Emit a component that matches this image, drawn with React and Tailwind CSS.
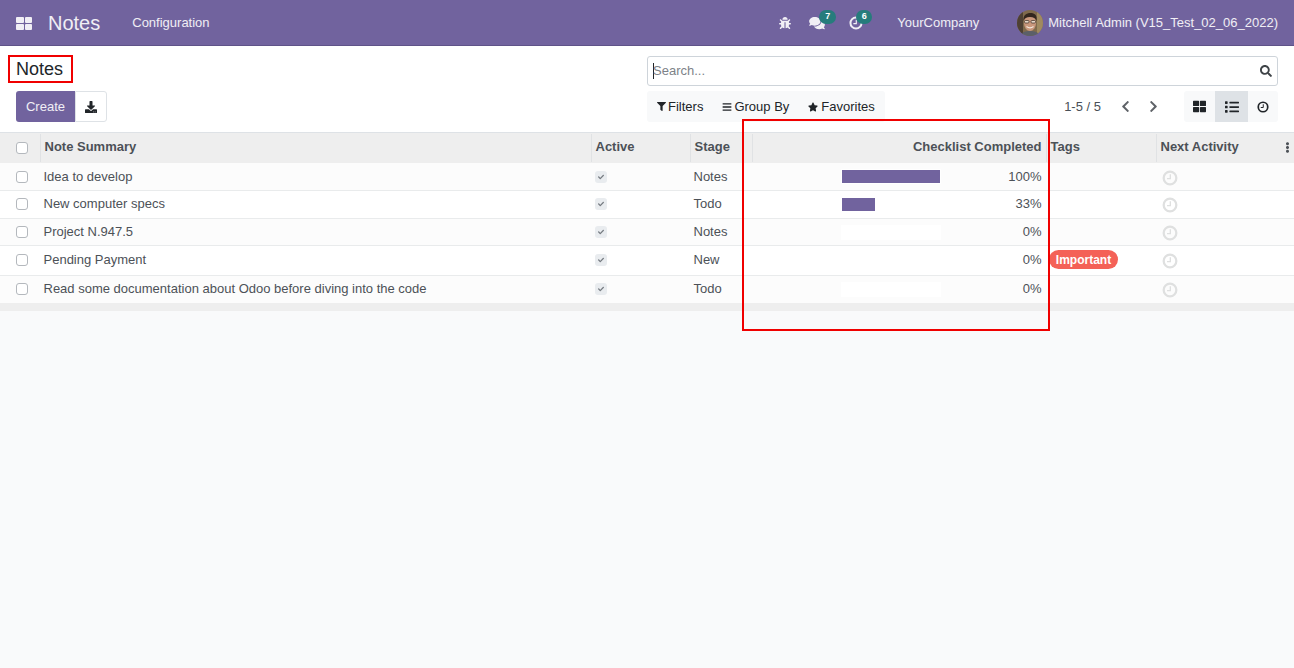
import { FaBug, FaComments, FaDownload, FaFilter, FaBars, FaStar, FaSearch, FaChevronLeft, FaChevronRight, FaThLarge, FaList, FaEllipsisV, FaCheck } from "react-icons/fa";

const rows = [
  { name: "Idea to develop", stage: "Notes", pct: 100, h: "h-[28px]", bg: "bg-[#fcfcfc]" },
  { name: "New computer specs", stage: "Todo", pct: 33, h: "h-[28px]", bg: "bg-white", up: true },
  { name: "Project N.947.5", stage: "Notes", pct: 0, h: "h-[27px]", bg: "bg-[#fcfcfc]" },
  { name: "Pending Payment", stage: "New", pct: 0, h: "h-[30px]", bg: "bg-white", tag: "Important", up: true },
  { name: "Read some documentation about Odoo before diving into the code", stage: "Todo", pct: 0, h: "h-[27px]", bg: "bg-[#fcfcfc]", last: true, up: true },
];

const cols = "grid grid-cols-[41px_550px_99px_62px_294px_110px_138px]";

function Check() {
  return <span className="block w-[12px] h-[12px] rounded-[3px] border border-[#b4b8bd] bg-white" />;
}

function ClockO({ className }) {
  return (
    <svg viewBox="0 0 24 24" fill="none" stroke="currentColor" className={className}>
      <circle cx="12" cy="12" r="9.5" strokeWidth="3.4" />
      <path d="M12.5 6.5v6.5H7.5" strokeWidth="2" />
    </svg>
  );
}

function Avatar() {
  return (
    <svg width="26" height="26" viewBox="0 0 26 26" className="rounded-full">
      <rect width="26" height="26" fill="#7f6a4c" />
      <rect x="0" y="0" width="6" height="26" fill="#4e4034" />
      <rect x="20" y="0" width="6" height="26" fill="#a08a60" />
      <ellipse cx="13" cy="13" rx="6" ry="8" fill="#c9977c" />
      <path d="M6.5 11c-.5-6 3-8 7-8s7 2 6 8c-1-3-3-4-6.500-4s-5.500 1-6.500 4z" fill="#33261e" />
      <rect x="7.500" y="10.500" width="4.500" height="2.500" rx="1" fill="#e8d8c8" stroke="#3a2c24" strokeWidth="0.7" />
      <rect x="14" y="10.500" width="4.500" height="2.500" rx="1" fill="#e8d8c8" stroke="#3a2c24" strokeWidth="0.7" />
      <path d="M9.500 16.500c2 1.500 5 1.500 7 0" stroke="#f3e7dd" strokeWidth="1.200" fill="none" />
      <path d="M3 26c1-4 6-5 10-5s9 1 10 5z" fill="#5b5f68" />
    </svg>
  );
}

function Navbar() {
  return (
    <header className="h-[46px] bg-[#71639e] border-b border-[#5f5388] flex items-center text-white">
      <span className="ml-4 grid grid-cols-2 gap-[1px] w-[16px] mt-[1px]">
        <i className="h-[6px] bg-white/90 rounded-[1px]" />
        <i className="h-[6px] bg-white/90 rounded-[1px]" />
        <i className="h-[6px] bg-white/90 rounded-[1px]" />
        <i className="h-[6px] bg-white/90 rounded-[1px]" />
      </span>
      <span className="ml-4 text-[20px] text-white/90">Notes</span>
      <span className="ml-[32px] text-[13px] text-white/90">Configuration</span>

      <div className="ml-auto flex items-center text-white/90 text-[13px]">
        <FaBug className="w-[12px] h-[12px]" />
        <span className="relative ml-[18px]">
          <FaComments className="w-[16px] h-[14px] block" />
          <span className="absolute -top-[6px] left-[10px] w-[17px] h-[14px] rounded-full bg-[#267c7c] text-white text-[9px] font-bold flex items-center justify-center">7</span>
        </span>
        <span className="relative ml-[24px]">
          <ClockO className="w-[14px] h-[14px] block" />
          <span className="absolute -top-[6px] left-[7px] w-[16px] h-[14px] rounded-full bg-[#267c7c] text-white text-[9px] font-bold flex items-center justify-center">6</span>
        </span>
        <span className="ml-[34px]">YourCompany</span>
        <span className="ml-[38px]"><Avatar /></span>
        <span className="ml-[5px] mr-4">Mitchell Admin (V15_Test_02_06_2022)</span>
      </div>
    </header>
  );
}

function ControlPanel() {
  return (
    <div className="h-[87px] bg-white grid grid-cols-[647px_1fr] pr-4 border-b border-[#dee2e6]">
      <div className="pt-[9px]">
        <h1 className="ml-2 w-[65px] h-[28px] border-2 border-[#f00000] text-[18px] leading-[25px] pl-[6px] text-[#212529]">Notes</h1>
        <div className="flex mt-2 ml-4">
          <button className="w-[59px] h-[31px] bg-[#71639e] text-white/90 text-[13px] rounded-l-[3px]">Create</button>
          <button className="w-[32px] h-[31px] border border-[#dee2e6] rounded-r-[3px] flex items-center justify-center text-[#212529]">
            <FaDownload className="w-[12px] h-[12px]" />
          </button>
        </div>
      </div>
      <div className="pt-[10px]">
        <div className="h-[30px] border border-[#ced4da] rounded-[3px] flex items-center pl-[5px] pr-[5px]">
          <span className="w-px h-[16px] bg-[#212529]" />
          <span className="-ml-px text-[13px] text-[#7d8288] flex-1">Search...</span>
          <FaSearch className="w-[12px] h-[12px] text-[#3f4448]" />
        </div>
        <div className="mt-[5px] flex items-center">
          <div className="w-[238px] h-[31px] bg-[#f8f9fa] rounded-[3px] flex items-center text-[13px] text-[#212529]">
            <span className="ml-[10px] flex items-center gap-[2px]"><FaFilter className="w-[9px] h-[9px]" />Filters</span>
            <span className="ml-[19px] flex items-center gap-[2px]"><FaBars className="w-[10px] h-[10px]" />Group By</span>
            <span className="ml-[19px] flex items-center gap-[3px]"><FaStar className="w-[10px] h-[10px]" />Favorites</span>
          </div>
          <span className="ml-auto text-[13px] text-[#495057]">1-5 / 5</span>
          <FaChevronLeft className="ml-[19px] w-[11px] h-[13px] text-[#5f6368]" />
          <FaChevronRight className="ml-[17px] w-[11px] h-[13px] text-[#5f6368]" />
          <div className="ml-[25px] w-[94px] h-[31px] bg-[#f8f9fa] rounded-[3px] flex text-[#212529]">
            <span className="w-[31px] flex items-center justify-center"><FaThLarge className="w-[13px] h-[13px]" /></span>
            <span className="w-[33px] bg-[#dee2e6] flex items-center justify-center"><FaList className="w-[14px] h-[14px]" /></span>
            <span className="w-[30px] flex items-center justify-center pr-[1px]"><ClockO className="w-[12px] h-[12px]" /></span>
          </div>
        </div>
      </div>
    </div>
  );
}

function Head({ children, right }) {
  return (
    <div className={`h-full flex items-center pb-[2px] text-[13px] font-bold text-[#4c5157] ${right ? "justify-end pr-[4.5px]" : "pl-[3.5px]"}`}>
      {children}
    </div>
  );
}

function Table() {
  return (
    <div>
      <div className={`${cols} h-[30px] bg-[#eeeeee]`}>
        <div className="flex items-center pl-4"><Check /></div>
        <div className="border-l border-[#e0e2e4] my-[1px] -ml-px"><Head>Note Summary</Head></div>
        <div className="border-l border-[#e0e2e4] my-[1px]"><Head>Active</Head></div>
        <div className="border-l border-[#e0e2e4] my-[1px]"><Head>Stage</Head></div>
        <div className="border-l border-[#e0e2e4] my-[1px]"><Head right>Checklist Completed</Head></div>
        <div className="border-l border-[#e0e2e4] my-[1px]"><Head>Tags</Head></div>
        <div className="border-l border-[#e0e2e4] my-[1px] relative">
          <Head>Next Activity</Head>
          <FaEllipsisV className="absolute right-[2px] top-[8px] w-[9px] h-[11px] text-[#4c5157]" />
        </div>
      </div>
      {rows.map((r) => {
        const up = r.up ? "pb-[2px]" : "";
        return (
          <div key={r.name} className={`${cols} ${r.h} ${r.bg} ${r.last ? "" : "border-b border-[#e9ebec]"} text-[13px] text-[#4c5157]`}>
            <div className={`flex items-center pl-4 ${up}`}><Check /></div>
            <div className={`flex items-center pl-[2.5px] ${up}`}>{r.name}</div>
            <div className={`flex items-center pl-[4px] ${up}`}>
              <span className="w-[12px] h-[12px] rounded-[3px] bg-[#e9ecef] flex items-center justify-center">
                <FaCheck className="w-[6px] h-[6px] text-[#757a80]" />
              </span>
            </div>
            <div className={`flex items-center pl-[3.5px] ${up}`}>{r.stage}</div>
            <div className="flex items-center pl-[89px] pr-[4.5px]">
              <div className="w-[100px] h-[15px] bg-white p-px">
                <div className="h-full bg-[#71639e]" style={{ width: `${Math.ceil(r.pct * 0.98)}px` }} />
              </div>
              <span className={`ml-auto ${r.up ? "mb-[2px]" : ""}`}>{r.pct}%</span>
            </div>
            <div className={`flex items-center pl-[3px] ${up}`}>
              {r.tag && (
                <span className="h-[19px] w-[69px] rounded-full bg-[#f46157] text-white text-[12px] font-bold flex items-center justify-center">{r.tag}</span>
              )}
            </div>
            <div className={`flex items-center pl-[6px] ${r.up ? "" : "pt-[2px]"}`}>
              <ClockO className="w-[16px] h-[16px] text-[#dfe0e0]" />
            </div>
          </div>
        );
      })}
      <div className="h-[8px] bg-[#eeeeee]" />
    </div>
  );
}

export default function App() {
  return (
    <div className="relative h-[668px] overflow-hidden bg-[#f9fafb] font-['Liberation_Sans',Arial,sans-serif]">
      <Navbar />
      <ControlPanel />
      <Table />
      {/* red annotation */}
      <div className="absolute left-[742px] top-[119px] w-[308px] h-[212px] border-2 border-[#f00000] pointer-events-none" />
    </div>
  );
}
